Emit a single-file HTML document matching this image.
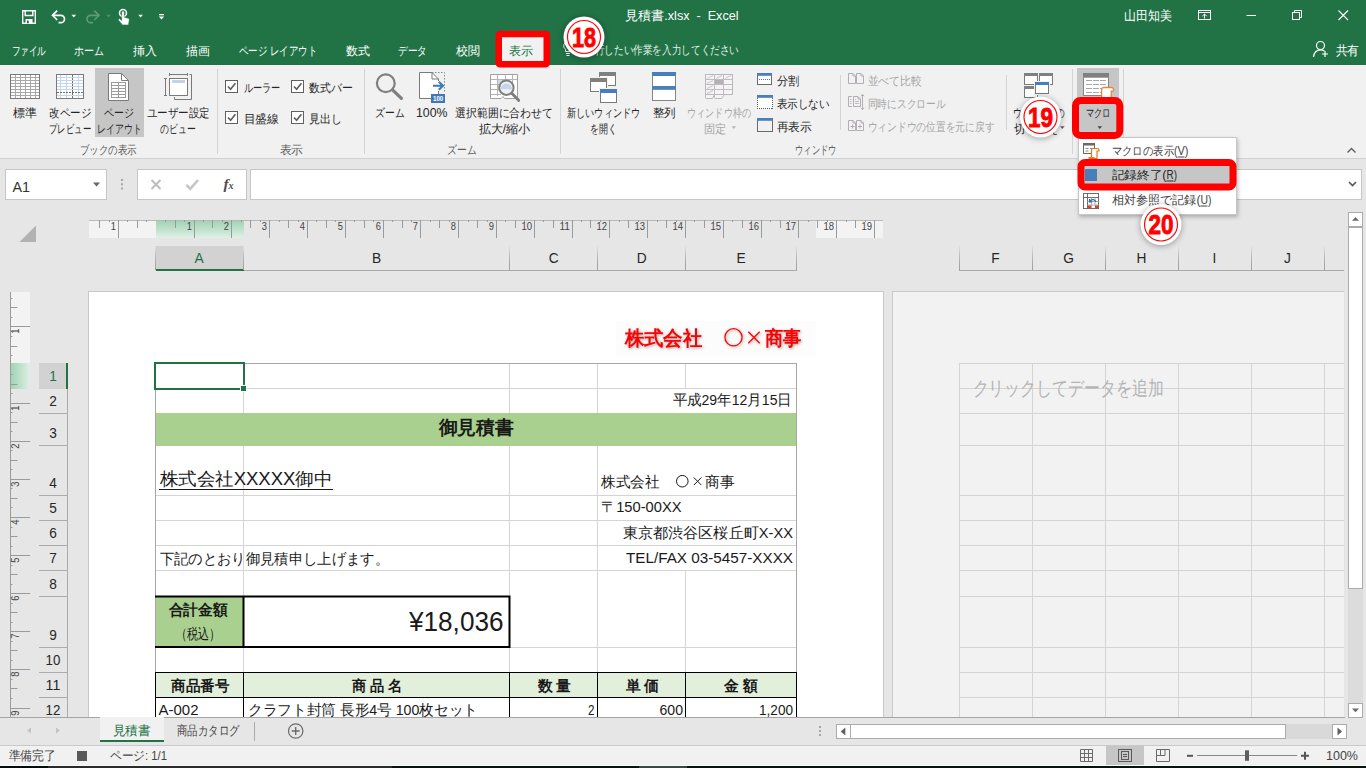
<!DOCTYPE html>
<html lang="ja">
<head>
<meta charset="utf-8">
<title>見積書.xlsx - Excel</title>
<style>
*{box-sizing:border-box;margin:0;padding:0}
html,body{width:1366px;height:768px;overflow:hidden;background:#e6e6e6;font-family:"Liberation Sans",sans-serif;font-size:12px;color:#262626}
.abs{position:absolute}
svg{overflow:visible}
svg text{font-family:"Liberation Sans",sans-serif}
#app{position:relative;width:1366px;height:768px;overflow:hidden;background:#e6e6e6}
#title{left:0;top:0;width:1366px;height:65px;background:#217346}
#ribbon{left:0;top:65px;width:1366px;height:94px;background:#f1f1f1;border-bottom:1px solid #d2d2d2}
.box{position:absolute;background:#fff;border:1px solid #c6c6c6}
.r{position:absolute}
</style>
</head>
<body>
<div id="app">
<div id="title" class="abs"></div>
<div class="abs" style="left:499px;top:35px;width:48px;height:30px;background:#f1f1f1"></div>
<svg class="abs" style="left:0px;top:0px" width="1366" height="64" viewBox="0 0 1366 64">
  <!-- save -->
  <path d="M22.7 10.700h12.600v12.600h-12.600z" fill="none" stroke="#fff" stroke-width="1.400"/>
  <path d="M25.200 10.700v4.800h7.600v-4.800" fill="none" stroke="#fff" stroke-width="1.400"/>
  <rect x="25.500" y="19" width="7" height="4.300" fill="#fff"/>
  <rect x="27" y="20.600" width="1.800" height="2.700" fill="#217346"/>
  <!-- undo -->
  <path d="M53 15.300h7.800a3.700 3.700 0 0 1 0 7.400h-2.300" fill="none" stroke="#fff" stroke-width="1.700"/>
  <path d="M57.200 10.600l-4.700 4.700 4.700 4.700" fill="none" stroke="#fff" stroke-width="1.700"/>
  <path d="M71.500 14.700h4.600l-2.300 2.900z" fill="#fff"/>
  <!-- redo (dim) -->
  <path d="M98.500 15.300h-7.800a3.700 3.700 0 0 0 0 7.400h2.300" fill="none" stroke="#5d9b79" stroke-width="1.700"/>
  <path d="M94.300 10.600l4.700 4.700-4.700 4.700" fill="none" stroke="#5d9b79" stroke-width="1.700"/>
  <path d="M106.200 14.700h4.600l-2.300 2.900z" fill="#4f9069"/>
  <!-- touch -->
  <circle cx="123" cy="13" r="3.500" fill="none" stroke="#fff" stroke-width="1.500"/>
  <path d="M121.700 12.300a1.300 1.300 0 0 1 2.600 0v5l3.700 0.900c1 .3 1.400 1 1.200 2l-0.700 4.700h-6l-3.900-4.700c-.6-.9.400-1.800 1.300-1.200l1.800 1.400z" fill="#fff" stroke="#217346" stroke-width="0.500"/>
  <path d="M138.300 14.700h4.600l-2.300 2.900z" fill="#fff"/>
  <!-- customize -->
  <rect x="159" y="14" width="5" height="1.300" fill="#fff"/>
  <path d="M158.800 16.600h5.400l-2.700 3z" fill="#fff"/>
  <!-- ribbon display options -->
  <rect x="1198.500" y="10.500" width="12" height="9" fill="none" stroke="#fff" stroke-width="1"/>
  <path d="M1198.500 12.500h12" stroke="#fff" stroke-width="1"/>
  <path d="M1204.500 18.500v-4.500M1202.300 16.200l2.200-2.200 2.200 2.200" fill="none" stroke="#fff" stroke-width="1"/>
  <!-- minimize -->
  <path d="M1246.500 15.500h9.500" stroke="#fff" stroke-width="1"/>
  <!-- restore -->
  <rect x="1292.500" y="12.500" width="7" height="7" fill="none" stroke="#fff" stroke-width="1"/>
  <path d="M1294.500 12.500v-2h7v7h-2" fill="none" stroke="#fff" stroke-width="1"/>
  <!-- close -->
  <path d="M1338.500 10.500l9.500 9.500M1348 10.500l-9.500 9.500" stroke="#fff" stroke-width="1.100"/>
  <!-- bulb -->
  <path d="M568 41.500a4.300 4.300 0 0 0-2.500 7.800v2.200h5v-2.200a4.300 4.300 0 0 0-2.500-7.800zM566 53.500h4M566.500 55.500h3" fill="none" stroke="#fff" stroke-width="1"/>
  <!-- share person -->
  <circle cx="1320.500" cy="45.500" r="4" fill="none" stroke="#fff" stroke-width="1.200"/>
  <path d="M1313.500 57c.5-4.500 3-7.200 7-7.200 1.600 0 2.900.4 3.900 1.200" fill="none" stroke="#fff" stroke-width="1.200"/>
  <path d="M1325 51v6M1322 54h6" stroke="#fff" stroke-width="1.200"/>
<text x="625" y="20" font-size="12.5" textLength="113.5" lengthAdjust="spacingAndGlyphs" fill="#fff" xml:space="preserve">見積書.xlsx&#160; -&#160; Excel</text>
<text x="1124" y="20" font-size="12.5" textLength="48" lengthAdjust="spacingAndGlyphs" fill="#fff">山田知美</text>
<text x="11.5" y="54.5" font-size="12" textLength="34.5" lengthAdjust="spacingAndGlyphs" fill="#fff">ファイル</text>
<text x="74" y="54.5" font-size="12" textLength="30" lengthAdjust="spacingAndGlyphs" fill="#fff">ホーム</text>
<text x="133" y="54.5" font-size="12" textLength="24" lengthAdjust="spacingAndGlyphs" fill="#fff">挿入</text>
<text x="186" y="54.5" font-size="12" textLength="24" lengthAdjust="spacingAndGlyphs" fill="#fff">描画</text>
<text x="239" y="54.5" font-size="12" textLength="78" lengthAdjust="spacingAndGlyphs" fill="#fff">ページ レイアウト</text>
<text x="346" y="54.5" font-size="12" textLength="24" lengthAdjust="spacingAndGlyphs" fill="#fff">数式</text>
<text x="398" y="54.5" font-size="12" textLength="29" lengthAdjust="spacingAndGlyphs" fill="#fff">データ</text>
<text x="456" y="54.5" font-size="12" textLength="24" lengthAdjust="spacingAndGlyphs" fill="#fff">校閲</text>
<text x="585" y="54" font-size="11.7" textLength="154" lengthAdjust="spacingAndGlyphs" fill="#e3efe8">実行したい作業を入力してください</text>
<text x="1335.5" y="54.5" font-size="12.5" textLength="23.5" lengthAdjust="spacingAndGlyphs" fill="#fff">共有</text>
<text x="509" y="54.5" font-size="12" textLength="24" lengthAdjust="spacingAndGlyphs" fill="#217346">表示</text>
</svg>
<div id="ribbon" class="abs"></div>
<svg class="abs" style="left:0px;top:0px" width="1366" height="164" viewBox="0 0 1366 164"><rect x="95" y="68" width="49" height="69" fill="#c6c6c6"/>
<rect x="10.500" y="74.500" width="29" height="24" fill="#fff" stroke="#7a7a7a"/><path d="M15.5 75v23M20.5 75v23M25.5 75v23M30.5 75v23M35.5 75v23M11 77.5h28M11 80.5h28M11 83.5h28M11 86.5h28M11 89.5h28M11 92.5h28M11 95.5h28" stroke="#a8a8a8" fill="none"/>
<rect x="56.500" y="74.500" width="27" height="24" fill="#fff" stroke="#7a7a7a"/><path d="M60.5 75v23M66.5 75v23M78.5 75v23M57 77.5h26M57 80.5h26M57 83.5h26M57 86.5h26M57 89.5h26M57 95.5h26" stroke="#c3d6ee" fill="none"/><path d="M72.500 75v23" stroke="#6e6e6e" stroke-dasharray="2 1" fill="none"/><path d="M57 92.500h26" stroke="#6e6e6e" stroke-dasharray="2 1" fill="none"/>
<path d="M108.500 73.500h13l7 7v20h-20z" fill="#fff" stroke="#7a7a7a"/><path d="M121.500 73.500v7h7" fill="none" stroke="#7a7a7a"/>
<rect x="111.500" y="82.500" width="14" height="15" fill="#fff" stroke="#9c9c9c"/><path d="M118.500 83v14M112 85.500h13M112 88.500h13M112 91.500h13M112 94.500h13" stroke="#9c9c9c" fill="none"/>
<path d="M189.500 74.500h2v25h-17v-2.500" fill="none" stroke="#7a7a7a"/><rect x="169.500" y="78.500" width="18" height="17" fill="#fff" stroke="#7a7a7a"/><rect x="172.200" y="80.100" width="12.800" height="2.800" fill="#bdd0e9"/><path d="M169.500 74.500h18M169.500 73v3M187.500 73v3M165.500 78.500v17M164 78.500h3M164 95.500h3" stroke="#7a7a7a" fill="none"/>
<path d="M217.5 69v85" stroke="#d4d4d4"/><path d="M364.5 69v85" stroke="#d4d4d4"/><path d="M560.5 69v85" stroke="#d4d4d4"/>
<rect x="225.5" y="80.5" width="12" height="12" fill="#fff" stroke="#606060"/><path d="M228 86.5l2.600 2.800 4.800-6" fill="none" stroke="#606060" stroke-width="1.700"/>
<rect x="225.5" y="111.5" width="12" height="12" fill="#fff" stroke="#606060"/><path d="M228 117.5l2.600 2.800 4.800-6" fill="none" stroke="#606060" stroke-width="1.700"/>
<rect x="291.5" y="80.5" width="12" height="12" fill="#fff" stroke="#606060"/><path d="M294 86.5l2.600 2.800 4.800-6" fill="none" stroke="#606060" stroke-width="1.700"/>
<rect x="291.5" y="111.5" width="12" height="12" fill="#fff" stroke="#606060"/><path d="M294 117.5l2.600 2.800 4.800-6" fill="none" stroke="#606060" stroke-width="1.700"/>
<circle cx="385.800" cy="83.200" r="8.900" fill="none" stroke="#7f7f7f" stroke-width="2.200"/><path d="M392.800 90.200l8.600 8.200" stroke="#7f7f7f" stroke-width="3.200" stroke-linecap="round"/>
<path d="M432 72.500h12.500v19.500" fill="none" stroke="#8a8a8a" stroke-dasharray="1.500 1.500"/><path d="M419.500 72.500h12.500l6.500 6.500v19.500h-19z" fill="#fff" stroke="#7a7a7a"/><path d="M432 72.500v6.500h6.500" fill="none" stroke="#7a7a7a"/><rect x="431" y="81" width="9" height="10" fill="#fff"/><path d="M433 85.800h9.500M438.800 81.800l4.200 4-4.200 4" fill="none" stroke="#3e78b9" stroke-width="2.100"/><rect x="431" y="94" width="14" height="9" fill="#3e78b9"/><text x="433" y="101.2" font-size="6.8" textLength="10.3" lengthAdjust="spacingAndGlyphs" font-weight="bold" fill="#fff">100</text>
<path d="M490.500 74.500h27v24h-13l-1.500-2-2 2h-10.500z" fill="#fff" stroke="#a0a0a0"/><rect x="498" y="80" width="7" height="5" fill="#c9dbf0"/><path d="M497.500 75v21M505.500 75v10M512.500 75v8M491 79.500h26M491 84.500h8M491 89.500h8M491 94.500h10" stroke="#b5b5b5" fill="none"/><circle cx="506.400" cy="87.700" r="7.200" fill="#f1f1f1" stroke="#7f7f7f" stroke-width="2"/><path d="M500.600 89.300a5.800 5.800 0 0 1 11.600 0z" fill="#c3d6ee"/><path d="M512 93.500l6.600 6.800" stroke="#7f7f7f" stroke-width="3" stroke-linecap="round"/>
<text x="13" y="117" font-size="12" textLength="24" lengthAdjust="spacingAndGlyphs" fill="#262626">標準</text>
<text x="49" y="117" font-size="12" textLength="42" lengthAdjust="spacingAndGlyphs" fill="#262626">改ページ</text>
<text x="49" y="133" font-size="12" textLength="42" lengthAdjust="spacingAndGlyphs" fill="#262626">プレビュー</text>
<text x="104" y="117" font-size="12" textLength="30" lengthAdjust="spacingAndGlyphs" fill="#262626">ページ</text>
<text x="97" y="133" font-size="12" textLength="44.5" lengthAdjust="spacingAndGlyphs" fill="#262626">レイアウト</text>
<text x="146.5" y="117" font-size="12" textLength="63" lengthAdjust="spacingAndGlyphs" fill="#262626">ユーザー設定</text>
<text x="160" y="133" font-size="12" textLength="35.5" lengthAdjust="spacingAndGlyphs" fill="#262626">のビュー</text>
<text x="79.5" y="153.5" font-size="12" textLength="57" lengthAdjust="spacingAndGlyphs" fill="#5e5e5e">ブックの表示</text>
<text x="243.5" y="92" font-size="12" textLength="36.5" lengthAdjust="spacingAndGlyphs" fill="#262626">ルーラー</text>
<text x="243.5" y="123" font-size="12" textLength="35.5" lengthAdjust="spacingAndGlyphs" fill="#262626">目盛線</text>
<text x="309" y="92" font-size="12" textLength="43.5" lengthAdjust="spacingAndGlyphs" fill="#262626">数式バー</text>
<text x="309" y="123" font-size="12" textLength="33" lengthAdjust="spacingAndGlyphs" fill="#262626">見出し</text>
<text x="279.5" y="153.5" font-size="12" textLength="23.5" lengthAdjust="spacingAndGlyphs" fill="#5e5e5e">表示</text>
<text x="375" y="117" font-size="12" textLength="29.5" lengthAdjust="spacingAndGlyphs" fill="#262626">ズーム</text>
<text x="416" y="117" font-size="12" textLength="31.5" lengthAdjust="spacingAndGlyphs" fill="#262626">100%</text>
<text x="455" y="117" font-size="12" textLength="98" lengthAdjust="spacingAndGlyphs" fill="#262626">選択範囲に合わせて</text>
<text x="478.5" y="133" font-size="12" textLength="52" lengthAdjust="spacingAndGlyphs" fill="#262626">拡大/縮小</text>
<text x="447" y="153.5" font-size="12" textLength="29.5" lengthAdjust="spacingAndGlyphs" fill="#5e5e5e">ズーム</text>
<rect x="599.5" y="72.5" width="16" height="13" fill="#fff" stroke="#7a7a7a"/><rect x="599" y="72" width="17" height="4" fill="#808080"/><rect x="589" y="77" width="19" height="16" fill="#f1f1f1"/><rect x="590.5" y="78.5" width="16" height="13" fill="#fff" stroke="#7a7a7a"/><rect x="590" y="78" width="17" height="4" fill="#808080"/><rect x="599" y="88" width="19" height="16" fill="#f1f1f1"/><rect x="600.5" y="89.5" width="16" height="13" fill="#fff" stroke="#7a7a7a"/><rect x="600" y="89" width="17" height="4" fill="#4a7ebb"/>
<rect x="652.500" y="72.500" width="23" height="28" fill="#fff" stroke="#858585"/><rect x="652" y="72" width="24" height="4" fill="#4a7ebb"/><rect x="652" y="86" width="24" height="3.800" fill="#4a7ebb"/>
<path d="M705.500 94.500v3a1 1 0 0 0 1 1h6l2-4v3a1 1 0 0 0 1 1h6l3-4z" fill="#f7f2f7" stroke="#b9b9b9"/><rect x="705.500" y="74.500" width="27" height="20" fill="#f7f2f7" stroke="#b9b9b9"/><path d="M714.500 75v19.500M723.500 75v19.500M706 79.500h26M706 84.500h26M706 89.500h26" stroke="#bdbdbd" fill="none"/><path d="M707 78.500l6-3M707 83.500l6-3M707 88.500l6-3M707 93.500l6-3M716 78.500l6-3M725 78.500l6-3" stroke="#c6c6c6" fill="none"/><rect x="715" y="80" width="8" height="4" fill="#b3b1b3"/>
<path d="M731.500 126.300h4.600l-2.300 2.700z" fill="#b5b5b5"/><rect x="757.500" y="73.500" width="14" height="11" fill="#fff" stroke="#6a6a6a"/><rect x="757" y="73" width="15" height="2.800" fill="#4a7ebb"/><path d="M759 79.500h11" stroke="#4a7ebb" stroke-dasharray="1 1"/><rect x="757" y="95" width="16" height="14" fill="#fff"/><path d="M757.500 98v11M772.500 98v11M757 108.500h16" stroke="#5a5a5a" stroke-dasharray="1 1" fill="none"/><rect x="757" y="95" width="16" height="2.800" fill="#4a7ebb"/><rect x="757.500" y="118.500" width="15" height="13" fill="#f1f1f1" stroke="#6a6a6a"/><rect x="757" y="118" width="16" height="2.800" fill="#4a7ebb"/>
<path d="M840.500 75v55M1006.500 75v55" stroke="#d4d4d4"/><path d="M848.5 73.5h4.5l2.5 2.5v7.5h-7z" fill="#f5f0f5" stroke="#b0b0b0"/><path d="M853.0 73.5v2.5h2.5" fill="none" stroke="#b0b0b0"/><path d="M856.5 73.5h4.5l2.5 2.5v7.5h-7z" fill="#f5f0f5" stroke="#b0b0b0"/><path d="M861.0 73.5v2.5h2.5" fill="none" stroke="#b0b0b0"/><path d="M852 96.500h-3.500v10h3.500" fill="#f5f0f5" stroke="#b0b0b0"/><path d="M853.5 96.5h4.5l2.5 2.5v7.5h-7z" fill="#f5f0f5" stroke="#b0b0b0"/><path d="M858.0 96.5v2.5h2.5" fill="none" stroke="#b0b0b0"/><path d="M850 99.500h1.500M850 101.500h1.500M850 103.500h1.500M855 99.500h1M855 101.500h4M855 103.500h4" stroke="#bdbdbd" fill="none"/><path d="M862.500 94.500v15M861 96.200l1.500-1.800 1.500 1.800M861 107.800l1.500 1.800 1.500-1.800" stroke="#b0b0b0" fill="none"/><path d="M848.5 120.5h4.5l2.5 2.5v7.5h-7z" fill="#f5f0f5" stroke="#b0b0b0"/><path d="M853.0 120.5v2.5h2.5" fill="none" stroke="#b0b0b0"/><path d="M856.5 120.5h4.5l2.5 2.5v7.5h-7z" fill="#f5f0f5" stroke="#b0b0b0"/><path d="M861.0 120.5v2.5h2.5" fill="none" stroke="#b0b0b0"/><path d="M850.500 126.500h4M852.500 124.500v4M858 126.500h4M860 124.500v4" stroke="#b0b0b0" fill="none"/>
<rect x="1024.5" y="73.5" width="13" height="11" fill="#fff" stroke="#7a7a7a"/><rect x="1024" y="73" width="14" height="3" fill="#808080"/><rect x="1039.5" y="73.5" width="13" height="11" fill="#fff" stroke="#7a7a7a"/><rect x="1039" y="73" width="14" height="3" fill="#808080"/><rect x="1024.5" y="86.5" width="13" height="11" fill="#fff" stroke="#7a7a7a"/><rect x="1024" y="86" width="14" height="3" fill="#808080"/><rect x="1034" y="81" width="16" height="14" fill="#f1f1f1"/><rect x="1035.5" y="82.5" width="13" height="11" fill="#fff" stroke="#7a7a7a"/><rect x="1035" y="82" width="14" height="3" fill="#4a7ebb"/><path d="M1060 126.300h4.600l-2.300 2.700z" fill="#5e5e5e"/>
<path d="M1072.500 69v85M1123.500 69v85" stroke="#d4d4d4"/><rect x="1077" y="68" width="42" height="69" fill="#c6c6c6"/><rect x="1083.500" y="73.500" width="25" height="22" fill="#fff" stroke="#858585"/><rect x="1083" y="73" width="26" height="4.700" fill="#808080"/><path d="M1086 80.5h6M1093 80.5h6M1100 80.5h6M1086 84.5h6M1093 84.5h6M1100 84.5h6M1086 88.5h6M1093 88.5h6M1100 88.5h6M1086 92.5h6M1093 92.5h6M1100 92.5h6" stroke="#a8a8a8"/><path d="M1101.600 103v-13.300a2.200 2.200 0 0 1 2.200-2.200h7.700a2 2 0 0 1 2 2v1.700h-2.300v11.800z" fill="#fff" stroke="#e6873a" stroke-width="1.300"/><path d="M1097.500 126.300h4.600l-2.300 2.700z" fill="#444"/>
<text x="567" y="117" font-size="12" textLength="73" lengthAdjust="spacingAndGlyphs" fill="#262626">新しいウィンドウ</text>
<text x="590" y="133" font-size="12" textLength="27" lengthAdjust="spacingAndGlyphs" fill="#262626">を開く</text>
<text x="652.5" y="117" font-size="12" textLength="23" lengthAdjust="spacingAndGlyphs" fill="#262626">整列</text>
<text x="687" y="117" font-size="12" textLength="64" lengthAdjust="spacingAndGlyphs" fill="#a6a6a6">ウィンドウ枠の</text>
<text x="704" y="133" font-size="12" textLength="22.5" lengthAdjust="spacingAndGlyphs" fill="#a6a6a6">固定</text>
<text x="776.5" y="84.5" font-size="12" textLength="22.5" lengthAdjust="spacingAndGlyphs" fill="#262626">分割</text>
<text x="776.5" y="107.5" font-size="12" textLength="52.5" lengthAdjust="spacingAndGlyphs" fill="#262626">表示しない</text>
<text x="776.5" y="130.5" font-size="12" textLength="35" lengthAdjust="spacingAndGlyphs" fill="#262626">再表示</text>
<text x="795" y="153.5" font-size="12" textLength="41.5" lengthAdjust="spacingAndGlyphs" fill="#5e5e5e">ウィンドウ</text>
<text x="867.5" y="84.5" font-size="12" textLength="54.5" lengthAdjust="spacingAndGlyphs" fill="#a6a6a6">並べて比較</text>
<text x="867.5" y="107.5" font-size="12" textLength="78" lengthAdjust="spacingAndGlyphs" fill="#a6a6a6">同時にスクロール</text>
<text x="867.5" y="130.5" font-size="12" textLength="127" lengthAdjust="spacingAndGlyphs" fill="#a6a6a6">ウィンドウの位置を元に戻す</text>
<text x="1013" y="117" font-size="12" textLength="52" lengthAdjust="spacingAndGlyphs" fill="#262626">ウィンドウの</text>
<text x="1014" y="133" font-size="12" textLength="44" lengthAdjust="spacingAndGlyphs" fill="#262626">切り替え</text>
<text x="1085.5" y="117" font-size="12" textLength="25" lengthAdjust="spacingAndGlyphs" fill="#262626">マクロ</text>
<path d="M1347.500 152.500l4-4 4 4" fill="none" stroke="#5e5e5e" stroke-width="1.400"/></svg>
<div class="box" style="left:5px;top:169px;width:102px;height:31px"></div>
<div class="box" style="left:137px;top:169px;width:110px;height:31px"></div>
<div class="box" style="left:250px;top:169px;width:1112px;height:31px"></div>
<svg class="abs" style="left:0px;top:0px" width="1366" height="210" viewBox="0 0 1366 210"><text x="12.5" y="192" font-size="14.5" textLength="17.5" lengthAdjust="spacingAndGlyphs" fill="#333">A1</text>
<path d="M93 182.500h7l-3.500 4z" fill="#666"/><path d="M122 179v2M122 183.300v2M122 187.600v2" stroke="#a6a6a6" stroke-width="2"/><path d="M151.500 180l9 9M160.500 180l-9 9" stroke="#bcbcbc" stroke-width="2" fill="none"/><path d="M186.500 185l3.800 3.800 7.700-8.800" stroke="#c6c6c6" stroke-width="2.600" fill="none"/><text x="223.500" y="189" font-size="15.500" font-style="italic" font-weight="bold" fill="#4d4d4d" style="font-family:'Liberation Serif',serif">f</text><text x="228.500" y="189" font-size="10" font-style="italic" font-weight="bold" fill="#4d4d4d" style="font-family:'Liberation Serif',serif">x</text><path d="M1349 182l3.500 3.500 3.500-3.500" fill="none" stroke="#555" stroke-width="1.600"/></svg>
<div class="abs" style="left:88px;top:291px;width:796px;height:440px;background:#fff;border:1px solid #c9c9c9"></div>
<div class="abs" style="left:892px;top:291px;width:452px;height:440px;background:#f2f2f2;border:1px solid #c9c9c9;border-right:none"></div>
<div class="abs" style="left:89px;top:220px;width:67px;height:18px;background:#f3f3f3"></div>
<div class="abs" style="left:156px;top:220px;width:88px;height:18px;background:linear-gradient(#9fd2b3,#c4e3d0 60%,#e2efe7)"></div>
<div class="abs" style="left:816px;top:220px;width:67px;height:18px;background:#f3f3f3"></div>
<div class="abs" style="left:10px;top:292px;width:20px;height:71px;background:#f3f3f3"></div>
<div class="abs" style="left:10px;top:363px;width:20px;height:26px;background:linear-gradient(90deg,#9fd2b3,#c4e3d0 60%,#e2efe7)"></div>
<div class="abs" style="left:156px;top:246px;width:88px;height:25px;background:#d2d2d2;border-bottom:2px solid #217346"></div>
<div class="abs" style="left:39px;top:363px;width:29px;height:26px;background:#d2d2d2;border-right:2px solid #217346"></div>
<svg class="abs" style="left:0px;top:0px" width="1366" height="718" viewBox="0 0 1366 718"><defs><linearGradient id="hg" gradientUnits="userSpaceOnUse" x1="0" y1="246" x2="0" y2="270"><stop offset="0" stop-color="#e0e0e0"/><stop offset=".5" stop-color="#b5b5b5"/><stop offset="1" stop-color="#9c9c9c"/></linearGradient></defs><path d="M36 225.500v16.500h-16.500z" fill="#b2b2b2"/><path d="M89 220.500h794" stroke="#b9b9b9"/><path d="M99.5 220v8M109.5 220v2M118.5 220v18M127.5 220v2M137.5 220v8M146.5 220v2M165.5 220v2M175.5 220v8M184.5 220v2M194.5 220v18M203.5 220v2M212.5 220v8M222.5 220v2M231.5 220v18M241.5 220v2M250.5 220v8M260.5 220v2M269.5 220v18M279.5 220v2M288.5 220v8M298.5 220v2M307.5 220v18M316.5 220v2M326.5 220v8M335.5 220v2M345.5 220v18M354.5 220v2M364.5 220v8M373.5 220v2M383.5 220v18M392.5 220v2M402.5 220v8M411.5 220v2M420.5 220v18M430.5 220v2M439.5 220v8M449.5 220v2M458.5 220v18M468.5 220v2M477.5 220v8M487.5 220v2M496.5 220v18M505.5 220v2M515.5 220v8M524.5 220v2M534.5 220v18M543.5 220v2M553.5 220v8M562.5 220v2M572.5 220v18M581.5 220v2M590.5 220v8M600.5 220v2M609.5 220v18M619.5 220v2M628.5 220v8M638.5 220v2M647.5 220v18M657.5 220v2M666.5 220v8M676.5 220v2M685.5 220v18M694.5 220v2M704.5 220v8M713.5 220v2M723.5 220v18M732.5 220v2M742.5 220v8M751.5 220v2M761.5 220v18M770.5 220v2M780.5 220v8M789.5 220v2M798.5 220v18M808.5 220v2M817.5 220v8M827.5 220v2M836.5 220v18M846.5 220v2M855.5 220v8M865.5 220v2M874.5 220v18" stroke="#9a9a9a" fill="none"/><text x="186.8" y="230" font-size="10.5" textLength="5.2" lengthAdjust="spacingAndGlyphs" fill="#444">1</text>
<text x="223.8" y="230" font-size="10.5" textLength="5.2" lengthAdjust="spacingAndGlyphs" fill="#444">2</text>
<text x="261.8" y="230" font-size="10.5" textLength="5.2" lengthAdjust="spacingAndGlyphs" fill="#444">3</text>
<text x="299.8" y="230" font-size="10.5" textLength="5.2" lengthAdjust="spacingAndGlyphs" fill="#444">4</text>
<text x="337.8" y="230" font-size="10.5" textLength="5.2" lengthAdjust="spacingAndGlyphs" fill="#444">5</text>
<text x="375.8" y="230" font-size="10.5" textLength="5.2" lengthAdjust="spacingAndGlyphs" fill="#444">6</text>
<text x="412.8" y="230" font-size="10.5" textLength="5.2" lengthAdjust="spacingAndGlyphs" fill="#444">7</text>
<text x="450.8" y="230" font-size="10.5" textLength="5.2" lengthAdjust="spacingAndGlyphs" fill="#444">8</text>
<text x="488.8" y="230" font-size="10.5" textLength="5.2" lengthAdjust="spacingAndGlyphs" fill="#444">9</text>
<text x="521.4" y="230" font-size="10.5" textLength="10.6" lengthAdjust="spacingAndGlyphs" fill="#444">10</text>
<text x="559.4" y="230" font-size="10.5" textLength="10.6" lengthAdjust="spacingAndGlyphs" fill="#444">11</text>
<text x="596.4" y="230" font-size="10.5" textLength="10.6" lengthAdjust="spacingAndGlyphs" fill="#444">12</text>
<text x="634.4" y="230" font-size="10.5" textLength="10.6" lengthAdjust="spacingAndGlyphs" fill="#444">13</text>
<text x="672.4" y="230" font-size="10.5" textLength="10.6" lengthAdjust="spacingAndGlyphs" fill="#444">14</text>
<text x="710.4" y="230" font-size="10.5" textLength="10.6" lengthAdjust="spacingAndGlyphs" fill="#444">15</text>
<text x="748.4" y="230" font-size="10.5" textLength="10.6" lengthAdjust="spacingAndGlyphs" fill="#444">16</text>
<text x="785.4" y="230" font-size="10.5" textLength="10.6" lengthAdjust="spacingAndGlyphs" fill="#444">17</text>
<text x="823.4" y="230" font-size="10.5" textLength="10.6" lengthAdjust="spacingAndGlyphs" fill="#444">18</text>
<text x="861.4" y="230" font-size="10.5" textLength="10.6" lengthAdjust="spacingAndGlyphs" fill="#444">19</text>
<text x="110.8" y="230" font-size="10.5" textLength="5.2" lengthAdjust="spacingAndGlyphs" fill="#444">1</text>
<path d="M10.500 292v425" stroke="#9c9c9c"/><path d="M10.500 298.5h2M10.500 307.5h7M10.500 317.5h2M10.500 326.5h19.5M10.500 336.5h2M10.500 346.5h7M10.500 355.5h2M10.500 374.5h2M10.500 384.5h7M10.500 393.5h2M10.500 403.5h19.5M10.500 412.5h2M10.500 422.5h7M10.500 431.5h2M10.500 441.5h19.5M10.500 450.5h2M10.500 460.5h7M10.500 469.5h2M10.500 479.5h19.5M10.500 488.5h2M10.500 498.5h7M10.500 507.5h2M10.500 517.5h19.5M10.500 527.5h2M10.500 536.5h7M10.500 546.5h2M10.500 555.5h19.5M10.500 565.5h2M10.500 574.5h7M10.500 584.5h2M10.500 593.5h19.5M10.500 603.5h2M10.500 612.5h7M10.500 622.5h2M10.500 631.5h19.5M10.500 641.5h2M10.500 650.5h7M10.500 660.5h2M10.500 669.5h19.5M10.500 679.5h2M10.500 688.5h7M10.500 698.5h2M10.500 708.5h19.5" stroke="#9a9a9a" fill="none"/><text transform="translate(19,328.5) rotate(-90)" font-size="10.500" fill="#444" text-anchor="end" textLength="5.200" lengthAdjust="spacingAndGlyphs">1</text><text transform="translate(19,405.5) rotate(-90)" font-size="10.500" fill="#444" text-anchor="end" textLength="5.200" lengthAdjust="spacingAndGlyphs">1</text><text transform="translate(19,443.5) rotate(-90)" font-size="10.500" fill="#444" text-anchor="end" textLength="5.200" lengthAdjust="spacingAndGlyphs">2</text><text transform="translate(19,481.5) rotate(-90)" font-size="10.500" fill="#444" text-anchor="end" textLength="5.200" lengthAdjust="spacingAndGlyphs">3</text><text transform="translate(19,519.5) rotate(-90)" font-size="10.500" fill="#444" text-anchor="end" textLength="5.200" lengthAdjust="spacingAndGlyphs">4</text><text transform="translate(19,557.5) rotate(-90)" font-size="10.500" fill="#444" text-anchor="end" textLength="5.200" lengthAdjust="spacingAndGlyphs">5</text><text transform="translate(19,595.5) rotate(-90)" font-size="10.500" fill="#444" text-anchor="end" textLength="5.200" lengthAdjust="spacingAndGlyphs">6</text><text transform="translate(19,633.5) rotate(-90)" font-size="10.500" fill="#444" text-anchor="end" textLength="5.200" lengthAdjust="spacingAndGlyphs">7</text><text transform="translate(19,671.5) rotate(-90)" font-size="10.500" fill="#444" text-anchor="end" textLength="5.200" lengthAdjust="spacingAndGlyphs">8</text><text transform="translate(19,710.5) rotate(-90)" font-size="10.500" fill="#444" text-anchor="end" textLength="5.200" lengthAdjust="spacingAndGlyphs">9</text><path d="M155.5 246v24M243.5 246v24M509.5 246v24M597.5 246v24M685.5 246v24M796.5 246v24" stroke="url(#hg)" fill="none"/><path d="M244 270.500h553" stroke="#ababab"/><text x="194.6" y="263.2" font-size="15.5" textLength="9.2" lengthAdjust="spacingAndGlyphs" fill="#217346">A</text>
<text x="372.09999999999997" y="263.2" font-size="15.5" textLength="9.2" lengthAdjust="spacingAndGlyphs" fill="#262626">B</text>
<text x="548.75" y="263.2" font-size="15.5" textLength="9.9" lengthAdjust="spacingAndGlyphs" fill="#262626">C</text>
<text x="636.75" y="263.2" font-size="15.5" textLength="9.9" lengthAdjust="spacingAndGlyphs" fill="#262626">D</text>
<text x="736.6" y="263.2" font-size="15.5" textLength="9.2" lengthAdjust="spacingAndGlyphs" fill="#262626">E</text>
<path d="M959.5 246v24M1032.5 246v24M1105.5 246v24M1178.5 246v24M1251.5 246v24M1324.500 246v24" stroke="url(#hg)" fill="none"/><path d="M959 270.500h385" stroke="#ababab"/><text x="991.3" y="263.2" font-size="15.5" textLength="8.4" lengthAdjust="spacingAndGlyphs" fill="#262626">F</text>
<text x="1063.15" y="263.2" font-size="15.5" textLength="10.7" lengthAdjust="spacingAndGlyphs" fill="#262626">G</text>
<text x="1136.55" y="263.2" font-size="15.5" textLength="9.9" lengthAdjust="spacingAndGlyphs" fill="#262626">H</text>
<text x="1212.6" y="263.2" font-size="15.5" textLength="3.8" lengthAdjust="spacingAndGlyphs" fill="#262626">I</text>
<text x="1284.05" y="263.2" font-size="15.5" textLength="6.9" lengthAdjust="spacingAndGlyphs" fill="#262626">J</text>
<path d="M39 413.5h28M39 445.5h28M39 495.5h28M39 520.5h28M39 545.5h28M39 570.5h28M39 596.5h28M39 647.5h28M39 672.5h28M39 697.5h28" stroke="#ababab" fill="none"/><path d="M67.500 389v329" stroke="#ababab"/><text x="49.2" y="381.2" font-size="15.5" textLength="7.6" lengthAdjust="spacingAndGlyphs" fill="#217346">1</text>
<text x="49.2" y="406.2" font-size="15.5" textLength="7.6" lengthAdjust="spacingAndGlyphs" fill="#262626">2</text>
<text x="49.2" y="438.2" font-size="15.5" textLength="7.6" lengthAdjust="spacingAndGlyphs" fill="#262626">3</text>
<text x="49.2" y="488.2" font-size="15.5" textLength="7.6" lengthAdjust="spacingAndGlyphs" fill="#262626">4</text>
<text x="49.2" y="513.2" font-size="15.5" textLength="7.6" lengthAdjust="spacingAndGlyphs" fill="#262626">5</text>
<text x="49.2" y="538.2" font-size="15.5" textLength="7.6" lengthAdjust="spacingAndGlyphs" fill="#262626">6</text>
<text x="49.2" y="563.2" font-size="15.5" textLength="7.6" lengthAdjust="spacingAndGlyphs" fill="#262626">7</text>
<text x="49.2" y="589.2" font-size="15.5" textLength="7.6" lengthAdjust="spacingAndGlyphs" fill="#262626">8</text>
<text x="49.2" y="640.2" font-size="15.5" textLength="7.6" lengthAdjust="spacingAndGlyphs" fill="#262626">9</text>
<text x="45.6" y="665.2" font-size="15.5" textLength="14.8" lengthAdjust="spacingAndGlyphs" fill="#262626">10</text>
<text x="45.6" y="690.2" font-size="15.5" textLength="14.8" lengthAdjust="spacingAndGlyphs" fill="#262626">11</text>
<text x="45.6" y="715.2" font-size="15.5" textLength="14.8" lengthAdjust="spacingAndGlyphs" fill="#262626">12</text>
</svg>
<svg class="abs" style="left:0px;top:0px" width="1366" height="718" viewBox="0 0 1366 718"><rect x="616.500" y="321" width="199" height="34.500" fill="#fcfcfc"/><text x="624.5" y="345" font-size="20" textLength="77.5" lengthAdjust="spacingAndGlyphs" font-weight="bold" fill="#f00" style="filter:drop-shadow(1.500px 1.500px 1.500px rgba(0,0,0,.35))">株式会社</text>
<g style="filter:drop-shadow(1.500px 1.500px 1.500px rgba(0,0,0,.35))"><circle cx="733.500" cy="337.300" r="8.600" fill="none" stroke="#f00" stroke-width="1.300"/><path d="M748.300 331.800l11.400 11.400M759.700 331.800l-11.400 11.400" stroke="#f00" stroke-width="1.300"/></g><text x="765" y="345" font-size="20" textLength="36.5" lengthAdjust="spacingAndGlyphs" font-weight="bold" fill="#f00" style="filter:drop-shadow(1.500px 1.500px 1.500px rgba(0,0,0,.35))">商事</text>
<rect x="156" y="413" width="641" height="33" fill="#a9d08e"/><rect x="156" y="597" width="88" height="50" fill="#a9d08e"/><rect x="156" y="673" width="641" height="24" fill="#e2efda"/><path d="M156 388.5h641M156 495.5h641M156 520.5h641M156 545.5h641M156 570.5h641M156 647.5h641M243.5 363v50M243.5 446v150M243.5 647v25M509.5 363v50M509.5 446v150M509.5 647v25M597.5 363v50M597.5 446v226M685.5 363v26M685.5 570v102" stroke="#d4d4d4" fill="none"/><path d="M155 363.500h642M155.500 363v355M796.500 363v309" stroke="#a6a6a6" fill="none"/><path d="M155 596.500h355.500M155 647h355.500M243.500 596v51M509.500 595.500v52.500" stroke="#000" stroke-width="2" fill="none"/><path d="M155 672.500h642M155 697.500h642M155.500 672v46M243.500 672v46M509.500 672v46M597.500 672v46M685.500 672v46M796.500 672v46" stroke="#000" fill="none"/><rect x="155" y="363" width="89" height="26" fill="none" stroke="#217346" stroke-width="2"/><rect x="240.500" y="385.500" width="6" height="6" fill="#217346" stroke="#fff"/><text x="672.5" y="405" font-size="14.5" textLength="119.5" lengthAdjust="spacingAndGlyphs" fill="#1a1a1a">平成29年12月15日</text>
<text x="438.5" y="434.3" font-size="18.5" textLength="75" lengthAdjust="spacingAndGlyphs" font-weight="bold" fill="#1a1a1a">御見積書</text>
<text x="159.5" y="484.6" font-size="18" textLength="173" lengthAdjust="spacingAndGlyphs" fill="#1a1a1a">株式会社XXXXX御中</text>
<path d="M159 489.500h174" stroke="#1a1a1a"/><text x="601" y="486.5" font-size="14.5" textLength="58.5" lengthAdjust="spacingAndGlyphs" fill="#1a1a1a">株式会社</text>
<circle cx="682.300" cy="481.200" r="5.800" fill="none" stroke="#1a1a1a" stroke-width="1"/><path d="M693.800 477.500l7.600 7.600M701.400 477.500l-7.600 7.600" stroke="#1a1a1a" stroke-width="1"/><text x="705" y="486.5" font-size="14.5" textLength="29.5" lengthAdjust="spacingAndGlyphs" fill="#1a1a1a">商事</text>
<text x="601" y="512" font-size="14.5" textLength="80.5" lengthAdjust="spacingAndGlyphs" fill="#1a1a1a">〒150-00XX</text>
<text x="622.5" y="537.5" font-size="14.5" textLength="170.5" lengthAdjust="spacingAndGlyphs" fill="#1a1a1a">東京都渋谷区桜丘町X-XX</text>
<text x="626" y="562.5" font-size="14.5" textLength="167" lengthAdjust="spacingAndGlyphs" fill="#1a1a1a">TEL/FAX 03-5457-XXXX</text>
<text x="159.5" y="563.5" font-size="14.5" textLength="229.5" lengthAdjust="spacingAndGlyphs" fill="#1a1a1a">下記のとおり御見積申し上げます。</text>
<text x="168.5" y="615" font-size="14.5" textLength="59" lengthAdjust="spacingAndGlyphs" font-weight="bold" fill="#1a1a1a">合計金額</text>
<text x="176" y="639" font-size="14.5" textLength="44" lengthAdjust="spacingAndGlyphs" fill="#1a1a1a">（税込）</text>
<text x="409" y="631" font-size="28" textLength="94.5" lengthAdjust="spacingAndGlyphs" fill="#1a1a1a">¥18,036</text>
<text x="171" y="690.5" font-size="14.5" textLength="58.5" lengthAdjust="spacingAndGlyphs" font-weight="bold" fill="#1a1a1a">商品番号</text>
<text x="351.5" y="690.5" font-size="14.5" textLength="50.5" lengthAdjust="spacingAndGlyphs" font-weight="bold" fill="#1a1a1a">商 品 名</text>
<text x="537.5" y="690.5" font-size="14.5" textLength="33.5" lengthAdjust="spacingAndGlyphs" font-weight="bold" fill="#1a1a1a">数 量</text>
<text x="625.5" y="690.5" font-size="14.5" textLength="33.5" lengthAdjust="spacingAndGlyphs" font-weight="bold" fill="#1a1a1a">単 価</text>
<text x="724" y="690.5" font-size="14.5" textLength="33.5" lengthAdjust="spacingAndGlyphs" font-weight="bold" fill="#1a1a1a">金 額</text>
<text x="158.5" y="715" font-size="14.5" textLength="40" lengthAdjust="spacingAndGlyphs" fill="#1a1a1a">A-002</text>
<text x="248" y="715" font-size="14.5" textLength="230" lengthAdjust="spacingAndGlyphs" fill="#1a1a1a">クラフト封筒 長形4号 100枚セット</text>
<text x="588" y="715" font-size="14.5" textLength="6.5" lengthAdjust="spacingAndGlyphs" fill="#1a1a1a">2</text>
<text x="659.5" y="715" font-size="14.5" textLength="23.5" lengthAdjust="spacingAndGlyphs" fill="#1a1a1a">600</text>
<text x="759" y="715" font-size="14.5" textLength="34" lengthAdjust="spacingAndGlyphs" fill="#1a1a1a">1,200</text>
<path d="M959.5 363v355M1032.5 363v355M1105.5 363v355M1178.5 363v355M1251.5 363v355M1324.5 363v355M959 363.5h385M959 388.5h385M959 413.5h385M959 445.5h385M959 495.5h385M959 520.5h385M959 545.5h385M959 570.5h385M959 596.5h385M959 647.5h385M959 672.5h385M959 697.5h385" stroke="#d4d4d4" fill="none"/><text x="972.5" y="394.6" font-size="19.5" textLength="191" lengthAdjust="spacingAndGlyphs" fill="#b4b4b4">クリックしてデータを追加</text>
</svg>
<div class="abs" style="left:0;top:717px;width:1366px;height:28px;background:#e6e6e6"></div>
<div class="abs" style="left:0;top:717px;width:1345px;height:1px;background:#a5a5a5"></div>
<div class="abs" style="left:0;top:745px;width:1366px;height:1px;background:#cacaca"></div>
<div class="abs" style="left:0;top:746px;width:1366px;height:19px;background:#f1f1f1"></div>
<div class="abs" style="left:0;top:765px;width:1366px;height:1px;background:#f8f8f8"></div>
<div class="abs" style="left:0;top:766px;width:1366px;height:2px;background:#0a120e"></div>
<div class="abs" style="left:0;top:766px;width:48px;height:2px;background:#050d09"></div>
<div class="abs" style="left:48px;top:766px;width:344px;height:2px;background:#2b2b2b"></div>
<div class="abs" style="left:639px;top:766px;width:48px;height:2px;background:#3f4642"></div>
<div class="abs" style="left:100px;top:717px;width:64px;height:25px;background:#f1f1f1;border-bottom:2px solid #217346"></div>
<div class="abs" style="left:1106px;top:746px;width:38px;height:19px;background:#c6c6c6"></div>
<div class="abs" style="left:836px;top:724px;width:511px;height:15px;background:#d9d9d9"></div>
<div class="box" style="left:836px;top:724px;width:15px;height:15px;border-color:#ababab"></div>
<div class="box" style="left:850px;top:724px;width:436px;height:15px;border-color:#ababab"></div>
<div class="box" style="left:1332px;top:724px;width:15px;height:15px;border-color:#ababab"></div>
<div class="abs" style="left:1348px;top:212px;width:15px;height:506px;background:#dcdcdc"></div>
<div class="box" style="left:1348px;top:212px;width:15px;height:15px;border-color:#ababab"></div>
<div class="box" style="left:1348px;top:227px;width:15px;height:362px;border-color:#ababab"></div>
<div class="box" style="left:1348px;top:703px;width:15px;height:15px;border-color:#ababab"></div>
<svg class="abs" style="left:0px;top:0px" width="1366" height="768" viewBox="0 0 1366 768"><path d="M1352 220.800l3.500-3.800 3.500 3.800z" fill="#6a6a6a"/><path d="M1352 708.500l3.500 3.800 3.500-3.800z" fill="#6a6a6a"/><path d="M845.300 727.500l-4.600 4 4.600 4z" fill="#606060"/><path d="M1337.500 727.500l4.600 4-4.600 4z" fill="#606060"/><path d="M820 726v2M820 730v2M820 734v2" stroke="#a6a6a6" stroke-width="2"/><path d="M31 727.500l-4 3 4 3z" fill="#c3c3c3"/><path d="M56 727.500l4 3-4 3z" fill="#c3c3c3"/><text x="112.5" y="735" font-size="12.5" textLength="38" lengthAdjust="spacingAndGlyphs" fill="#217346">見積書</text>
<text x="177" y="735" font-size="12.5" textLength="62.5" lengthAdjust="spacingAndGlyphs" fill="#444">商品カタログ</text>
<path d="M254.500 722v19" stroke="#ababab"/><circle cx="295.700" cy="731" r="7.200" fill="none" stroke="#6a6a6a" stroke-width="1.200"/><path d="M291.700 731h8M295.700 727v8" stroke="#6a6a6a" stroke-width="1.400"/><text x="8.5" y="760" font-size="12.5" textLength="47.5" lengthAdjust="spacingAndGlyphs" fill="#444">準備完了</text>
<rect x="77" y="751" width="10" height="10" fill="#5a5a5a"/><text x="110" y="760" font-size="12.5" textLength="57" lengthAdjust="spacingAndGlyphs" fill="#444">ページ: 1/1</text>
<path d="M1080.500 749.500h12v12h-12zM1084.500 749.500v12M1088.500 749.500v12M1080.500 753.500h12M1080.500 757.500h12" fill="none" stroke="#6a6a6a"/><rect x="1118.500" y="749.500" width="13" height="12" fill="none" stroke="#5a5a5a"/><rect x="1121.500" y="751.500" width="7" height="8" fill="none" stroke="#5a5a5a"/><path d="M1123 754.500h4M1123 756.500h4" stroke="#5a5a5a"/><path d="M1156.500 749.500h13v12h-13zM1160.500 749.500v6M1156.500 755.500h8.500v-6" fill="none" stroke="#6a6a6a"/><path d="M1187 755.800h6" stroke="#555" stroke-width="2"/><path d="M1197 755.500h100" stroke="#8a8a8a"/><rect x="1245" y="750.300" width="4" height="10.500" fill="#5e5e5e"/><path d="M1301 755.800h8M1305 751.800v8" stroke="#555" stroke-width="2"/><text x="1326" y="760" font-size="12.5" textLength="32" lengthAdjust="spacingAndGlyphs" fill="#444">100%</text>
</svg>
<div class="abs" style="left:1078px;top:137px;width:159px;height:78px;background:#fff;border:1px solid #c6c6c6;box-shadow:1px 2px 4px rgba(0,0,0,.25)"></div>
<div class="abs" style="left:1080px;top:163px;width:155px;height:24px;background:#c6c6c6"></div>
<svg class="abs" style="left:0px;top:0px" width="1366" height="260" viewBox="0 0 1366 260"><rect x="1083.500" y="143.500" width="11" height="10" fill="#fff" stroke="#6a6a6a"/><rect x="1083" y="143" width="12" height="2.500" fill="#6a6a6a"/><path d="M1085.500 148.500h3M1090 148.500h3M1085.500 151h3" stroke="#8a8a8a"/><path d="M1091.500 158.500v-8.500a1.500 1.500 0 0 1 1.500-1.500h4.500a1.500 1.500 0 0 1 1.500 1.500v1h-2v7.500z" fill="#fff" stroke="#e07b1a" stroke-width="1.200"/><rect x="1088.500" y="157" width="6" height="2" fill="#e07b1a"/><rect x="1085" y="169" width="12" height="12" fill="#4a7ebb"/><rect x="1083.500" y="193.500" width="15" height="15" fill="#fff" stroke="#6a6a6a"/><path d="M1083.500 197.500h15M1087.500 193.500v15" stroke="#6a6a6a" fill="none"/><path d="M1091.500 197.500v8M1095 197.500v8M1087.500 201.500h11M1087.500 205h11" stroke="#b0b0b0" fill="none"/><rect x="1088" y="205.500" width="3.500" height="3" fill="#d24726"/><rect x="1095" y="205.500" width="3.500" height="3" fill="#d24726"/><path d="M1090 201.500c1-2.500 5-2.500 6 0.500M1089.500 199v2.800h2.800" fill="none" stroke="#2b6cb5" stroke-width="1.200"/><text x="1111.5" y="155" font-size="12" textLength="66" lengthAdjust="spacingAndGlyphs" fill="#444">マクロの表示(</text>
<text x="1177.5" y="155" font-size="12" textLength="11" lengthAdjust="spacingAndGlyphs" fill="#444">V)</text>
<path d="M1177.500 157h7" stroke="#444"/><text x="1111.5" y="179" font-size="12" textLength="55" lengthAdjust="spacingAndGlyphs" fill="#262626">記録終了(</text>
<text x="1166.5" y="179" font-size="12" textLength="10.5" lengthAdjust="spacingAndGlyphs" fill="#262626">R)</text>
<path d="M1166.500 181h7" stroke="#262626"/><text x="1111.5" y="204" font-size="12" textLength="89" lengthAdjust="spacingAndGlyphs" fill="#444">相対参照で記録(</text>
<text x="1200.5" y="204" font-size="12" textLength="11" lengthAdjust="spacingAndGlyphs" fill="#444">U)</text>
<path d="M1200.500 206h7" stroke="#444"/><rect x="498.75" y="33.95" width="48.0" height="30.39999999999999" rx="1.2" ry="1.2" fill="none" stroke="#ff0000" stroke-width="6.5"/><rect x="1075.5" y="100.5" width="44.299999999999955" height="35" rx="5" ry="5" fill="none" stroke="#ff0000" stroke-width="7"/><rect x="1081.0" y="162.5" width="152.0" height="24.5" rx="4" ry="4" fill="none" stroke="#ff0000" stroke-width="7"/><circle cx="584" cy="37" r="20.500" fill="#fff" style="filter:drop-shadow(0 1px 3px rgba(0,0,0,.35))"/><circle cx="584" cy="37" r="16.500" fill="#fff" stroke="#ff0000" stroke-width="1.150"/><text x="572.0" y="46.72" font-size="27" textLength="24" lengthAdjust="spacingAndGlyphs" font-weight="bold" fill="#ff0000" stroke="#ff0000" stroke-width="0.900">18</text>
<circle cx="1040.5" cy="117" r="20.500" fill="#fff" style="filter:drop-shadow(0 1px 3px rgba(0,0,0,.35))"/><circle cx="1040.5" cy="117" r="16.500" fill="#fff" stroke="#ff0000" stroke-width="1.150"/><text x="1028.0" y="126.72" font-size="27" textLength="25" lengthAdjust="spacingAndGlyphs" font-weight="bold" fill="#ff0000" stroke="#ff0000" stroke-width="0.900">19</text>
<circle cx="1161" cy="224.5" r="20.500" fill="#fff" style="filter:drop-shadow(0 1px 3px rgba(0,0,0,.35))"/><circle cx="1161" cy="224.5" r="16.500" fill="#fff" stroke="#ff0000" stroke-width="1.150"/><text x="1148.5" y="234.22" font-size="27" textLength="25" lengthAdjust="spacingAndGlyphs" font-weight="bold" fill="#ff0000" stroke="#ff0000" stroke-width="0.900">20</text>
</svg>

</div>
</body>
</html>
